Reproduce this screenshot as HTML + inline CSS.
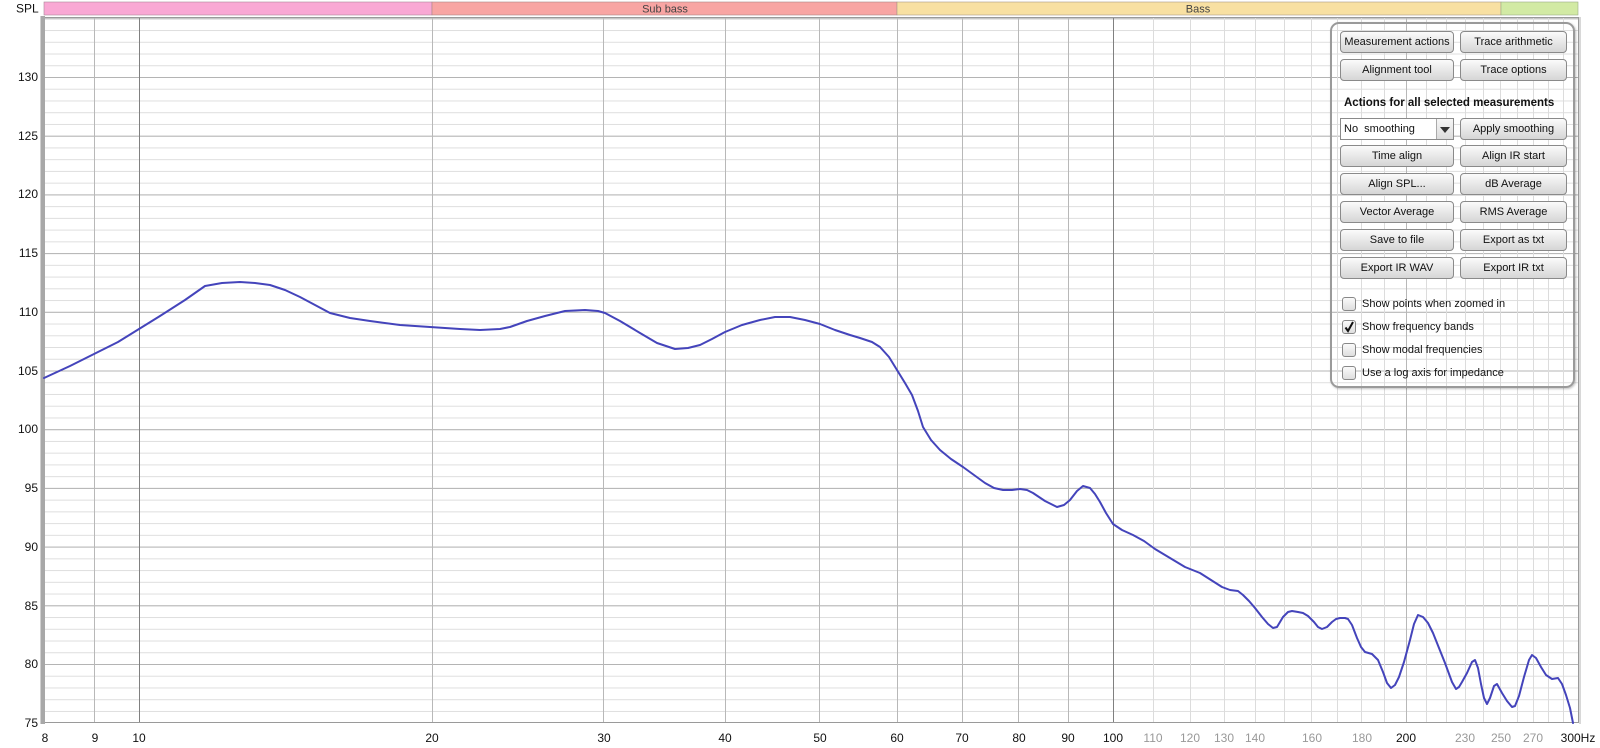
<!DOCTYPE html>
<html><head><meta charset="utf-8"><style>
html,body{margin:0;padding:0;background:#fff;}
body{width:1600px;height:748px;position:relative;overflow:hidden;font-family:"Liberation Sans",Arial,sans-serif;}
svg{position:absolute;left:0;top:0;}
.panel{position:absolute;left:1330px;top:22px;width:241px;height:362px;border:2px solid #9a9a9a;border-radius:9px;box-shadow:1px 1px 2px rgba(0,0,0,.25);}
.btn{position:absolute;height:20px;border:1px solid #8a8a8a;border-radius:4px;background:linear-gradient(#fbfbfb,#e4e4e4 60%,#d6d6d6);font-size:11px;line-height:20px;text-align:center;color:#111;box-sizing:content-box;}
.l{left:8px;width:112px;}
.r{left:128px;width:105px;}
.hd{position:absolute;left:12px;top:73px;font-size:11.5px;font-weight:bold;color:#111;}
.combo{position:absolute;left:8px;top:94px;width:112px;height:20px;border:1px solid #8a8a8a;background:#fff;font-size:11px;line-height:20px;color:#111;}
.combo span{padding-left:3px;}
.combo .ar{position:absolute;right:0;top:0;width:16px;height:20px;border-left:1px solid #aaa;background:linear-gradient(#f6f6f6,#dcdcdc);}
.combo .ar:after{content:"";position:absolute;left:3px;top:8px;border-left:5px solid transparent;border-right:5px solid transparent;border-top:6px solid #333;}
.cb{position:absolute;left:10px;width:12px;height:12px;border:1px solid #888;border-radius:3px;background:linear-gradient(#fafafa,#dedede);}
.cbl{position:absolute;left:30px;font-size:11px;color:#111;line-height:14px;}
</style></head><body>
<svg width="1600" height="748" viewBox="0 0 1600 748">
<defs>
<pattern id="minor" x="0" y="77" width="20" height="11.74" patternUnits="userSpaceOnUse"><line x1="0" y1="0.5" x2="20" y2="0.5" stroke="#dedede" stroke-width="1"/></pattern>
<pattern id="major" x="0" y="77" width="20" height="58.7" patternUnits="userSpaceOnUse"><line x1="0" y1="0.5" x2="20" y2="0.5" stroke="#b4b4b4" stroke-width="1"/></pattern>
</defs>
<rect x="44" y="2" width="388" height="13" fill="#f9a8d4" stroke="#a89" stroke-width="0.6"/>
<rect x="432" y="2" width="465" height="13" fill="#f8a5a3" stroke="#a88" stroke-width="0.6"/>
<rect x="897" y="2" width="604" height="13" fill="#f8e0a2" stroke="#a98" stroke-width="0.6"/>
<rect x="1501" y="2" width="77" height="13" fill="#d2eaa4" stroke="#9a8" stroke-width="0.6"/>
<text x="665" y="12.5" font-size="11" fill="#444" text-anchor="middle">Sub bass</text>
<text x="1198" y="12.5" font-size="11" fill="#444" text-anchor="middle">Bass</text>
<text x="16" y="12.5" font-size="12" fill="#111">SPL</text>
<rect x="44" y="17" width="1534" height="706" fill="url(#minor)"/>
<rect x="44" y="17" width="1534" height="706" fill="url(#major)"/>
<g stroke="#dcdcdc" stroke-width="1">
<line x1="1153.5" y1="17" x2="1153.5" y2="723"/><line x1="1190.5" y1="17" x2="1190.5" y2="723"/><line x1="1224.5" y1="17" x2="1224.5" y2="723"/><line x1="1255.5" y1="17" x2="1255.5" y2="723"/><line x1="1284.5" y1="17" x2="1284.5" y2="723"/><line x1="1311.5" y1="17" x2="1311.5" y2="723"/><line x1="1337.5" y1="17" x2="1337.5" y2="723"/><line x1="1361.5" y1="17" x2="1361.5" y2="723"/><line x1="1384.5" y1="17" x2="1384.5" y2="723"/><line x1="1426.5" y1="17" x2="1426.5" y2="723"/><line x1="1446.5" y1="17" x2="1446.5" y2="723"/><line x1="1465.5" y1="17" x2="1465.5" y2="723"/><line x1="1483.5" y1="17" x2="1483.5" y2="723"/><line x1="1500.5" y1="17" x2="1500.5" y2="723"/><line x1="1517.5" y1="17" x2="1517.5" y2="723"/><line x1="1533.5" y1="17" x2="1533.5" y2="723"/><line x1="1548.5" y1="17" x2="1548.5" y2="723"/><line x1="1563.5" y1="17" x2="1563.5" y2="723"/>
</g>
<g stroke="#b8b8b8" stroke-width="1">
<line x1="94.5" y1="17" x2="94.5" y2="723"/><line x1="432.5" y1="17" x2="432.5" y2="723"/><line x1="603.5" y1="17" x2="603.5" y2="723"/><line x1="725.5" y1="17" x2="725.5" y2="723"/><line x1="819.5" y1="17" x2="819.5" y2="723"/><line x1="897.5" y1="17" x2="897.5" y2="723"/><line x1="962.5" y1="17" x2="962.5" y2="723"/><line x1="1018.5" y1="17" x2="1018.5" y2="723"/><line x1="1068.5" y1="17" x2="1068.5" y2="723"/><line x1="1406.5" y1="17" x2="1406.5" y2="723"/>
</g>
<g stroke="#808080" stroke-width="1">
<line x1="139.5" y1="17" x2="139.5" y2="723"/><line x1="1113.5" y1="17" x2="1113.5" y2="723"/>
</g>
<line x1="44" y1="17.5" x2="1578" y2="17.5" stroke="#9a9a9a"/>
<line x1="44" y1="722.5" x2="1578" y2="722.5" stroke="#9a9a9a"/>
<line x1="1578.5" y1="17" x2="1578.5" y2="723" stroke="#9a9a9a"/>
<rect x="1579" y="17" width="2" height="707" fill="#d8d8d8"/>
<rect x="41" y="16" width="4" height="708" fill="#a8a8a8"/>
<rect x="40" y="16" width="1" height="708" fill="#d0d0d0"/>
<polyline fill="none" stroke="#4444bb" stroke-width="2" stroke-linejoin="round" stroke-linecap="round" points="44,378 70,366 94,354 118,342 139,329 160,316 185,300 205,286 222,283 240,282 255,283 270,285 285,290 300,297 315,305 330,313 350,318 370,321 400,325 430,327 460,329 480,330 500,329 510,327 527,321 545,316 565,311 585,310 598,311 605,313 620,321 640,333 657,343 675,349 688,348 700,345 712,339 725,332 742,325 760,320 775,317 790,317 805,320 820,324 835,330 850,335 860,338 872,342 880,347 889,357 897,370 905,383 912,395 918,411 923,427 931,440 940,450 951,459 963,467 974,475 985,483 994,488 1003,490 1012,490 1020,489 1027,490 1033,493 1045,501 1057,507 1064,505 1070,500 1077,491 1083,486 1090,488 1095,494 1100,502 1106,513 1113,524 1122,530 1133,535 1144,541 1155,549 1170,558 1185,567 1200,573 1211,580 1222,587 1230,590 1238,591 1243,595 1249,601 1255,608 1262,617 1268,624 1273,628 1277,627 1283,617 1288,612 1292,611 1298,612 1303,613 1308,616 1314,622 1318,627 1322,629 1327,627 1332,622 1336,619 1340,618 1345,618 1348,619 1352,625 1357,638 1361,647 1365,652 1372,654 1378,660 1383,672 1387,683 1391,688 1395,685 1399,677 1404,662 1410,640 1414,624 1418,615 1423,617 1428,623 1433,633 1439,648 1445,663 1452,682 1456,689 1459,687 1462,682 1467,673 1472,662 1475,660 1478,668 1481,684 1484,698 1487,704 1490,698 1494,686 1497,684 1502,693 1507,701 1512,707 1515,706 1519,696 1524,677 1529,660 1532,655 1536,658 1541,667 1546,675 1552,679 1558,678 1562,684 1566,695 1570,708 1573,723"/>
<g font-size="12" fill="#111" text-anchor="end">
<text x="38" y="81">130</text><text x="38" y="140">125</text><text x="38" y="198">120</text><text x="38" y="257">115</text><text x="38" y="316">110</text><text x="38" y="375">105</text><text x="38" y="433">100</text><text x="38" y="492">95</text><text x="38" y="551">90</text><text x="38" y="610">85</text><text x="38" y="668">80</text><text x="38" y="727">75</text>
</g>
<g font-size="12" fill="#111" text-anchor="middle">
<text x="45" y="742">8</text><text x="95" y="742">9</text><text x="139" y="742">10</text><text x="432" y="742">20</text><text x="604" y="742">30</text><text x="725" y="742">40</text><text x="820" y="742">50</text><text x="897" y="742">60</text><text x="962" y="742">70</text><text x="1019" y="742">80</text><text x="1068" y="742">90</text><text x="1113" y="742">100</text><text x="1406" y="742">200</text><text x="1578" y="742">300Hz</text>
</g>
<g font-size="12" fill="#999" text-anchor="middle">
<text x="1153" y="742">110</text><text x="1190" y="742">120</text><text x="1224" y="742">130</text><text x="1255" y="742">140</text><text x="1312" y="742">160</text><text x="1362" y="742">180</text><text x="1465" y="742">230</text><text x="1501" y="742">250</text><text x="1533" y="742">270</text>
</g>
</svg>
<div class="panel">
<div class="btn l" style="top:7px">Measurement actions</div>
<div class="btn r" style="top:7px">Trace arithmetic</div>
<div class="btn l" style="top:35px">Alignment tool</div>
<div class="btn r" style="top:35px">Trace options</div>
<div class="hd">Actions for all selected measurements</div>
<div class="combo"><span>No&nbsp; smoothing</span><div class="ar"></div></div>
<div class="btn r" style="top:94px">Apply smoothing</div>
<div class="btn l" style="top:121px">Time align</div>
<div class="btn r" style="top:121px">Align IR start</div>
<div class="btn l" style="top:149px">Align SPL...</div>
<div class="btn r" style="top:149px">dB Average</div>
<div class="btn l" style="top:177px">Vector Average</div>
<div class="btn r" style="top:177px">RMS Average</div>
<div class="btn l" style="top:205px">Save to file</div>
<div class="btn r" style="top:205px">Export as txt</div>
<div class="btn l" style="top:233px">Export IR WAV</div>
<div class="btn r" style="top:233px">Export IR txt</div>
<div class="cb" style="top:273px"></div><div class="cbl" style="top:273px">Show points when zoomed in</div>
<div class="cb" style="top:296px"><svg width="12" height="12" style="position:absolute;left:0;top:0"><path d="M2.5 6.5 L5 10 L10 1" fill="none" stroke="#111" stroke-width="2"/></svg></div><div class="cbl" style="top:296px">Show frequency bands</div>
<div class="cb" style="top:319px"></div><div class="cbl" style="top:319px">Show modal frequencies</div>
<div class="cb" style="top:342px"></div><div class="cbl" style="top:342px">Use a log axis for impedance</div>
</div>
</body></html>
